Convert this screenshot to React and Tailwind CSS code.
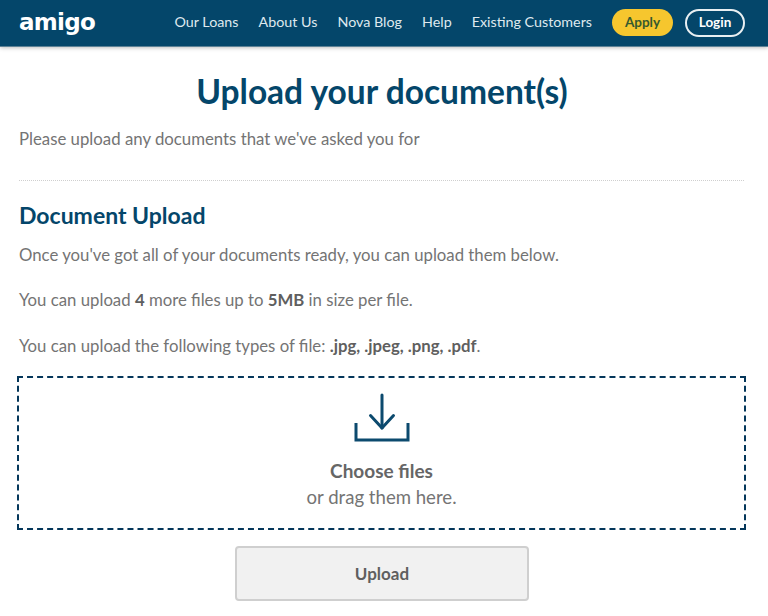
function Nav({ children }) {
  return <a className="text-[14.3px] leading-5 text-[#dfe9ef] whitespace-nowrap mb-[2px]">{children}</a>;
}
export default function App() {
  return (
    <div className="w-[768px] h-[616px] overflow-hidden bg-white font-['Lato',sans-serif] text-[#747474]">
      <header className="h-[47px] bg-[#04466a] border-b border-[#5d8296] shadow-[0_1px_4px_rgba(0,0,0,0.25)] flex items-center pl-[19px] pr-[23px]">
        <span className="font-['DejaVu_Sans',sans-serif] font-bold text-[23px] leading-none text-white tracking-[-0.7px] mb-[1px]">amigo</span>
        <nav className="ml-auto flex items-center gap-[20px]">
          <Nav>Our Loans</Nav>
          <Nav>About Us</Nav>
          <Nav>Nova Blog</Nav>
          <Nav>Help</Nav>
          <Nav>Existing Customers</Nav>
        </nav>
        <span className="ml-[20px] mb-[1px] w-[61px] h-[27px] rounded-full bg-[#f6c62e] text-[#35592f] text-[13.5px] font-bold flex items-center justify-center">Apply</span>
        <span className="ml-[12px] mb-[1px] w-[60px] h-[28px] rounded-full border-2 border-[#e9eff2] text-white text-[13.5px] font-bold flex items-center justify-center">Login</span>
      </header>
      <main className="px-[19px]">
        <h1 className="mt-[24px] pr-[4px] text-center text-[33.5px] leading-10 font-bold text-[#04466a]">Upload your document(s)</h1>
        <p className="mt-[16px] text-[16.8px] leading-6">Please upload any documents that we've asked you for</p>
        <div className="mt-[29px] mr-[5px] border-t border-dotted border-[#cfcfcf]"></div>
        <h2 className="mt-[20px] text-[23px] leading-7 font-bold text-[#04466a]">Document Upload</h2>
        <p className="mt-[14px] text-[16.75px] leading-6">Once you've got all of your documents ready, you can upload them below.</p>
        <p className="mt-[21px] text-[16.75px] leading-6">You can upload <b className="text-[#5f5f5f]">4</b> more files up to <b className="text-[#5f5f5f]">5MB</b> in size per file.</p>
        <p className="mt-[22px] text-[16.75px] leading-6">You can upload the following types of file: <b className="text-[#5f5f5f]">.jpg, .jpeg, .png, .pdf</b>.</p>
        <div className="mt-[18px] -ml-[2px] w-[729px] h-[154px] border-2 border-dashed border-[#04365a] flex flex-col items-center">
          <svg className="mt-[15px]" width="58" height="50" viewBox="0 0 58 50" fill="none" stroke="#0c4a6e" strokeWidth="3" strokeLinecap="round" strokeLinejoin="round">
            <path d="M29 2V35" />
            <path d="M17.5 22.5L29 35L40.5 22.5" />
            <path d="M3 30V47H55V30" strokeLinecap="butt" strokeLinejoin="miter" />
          </svg>
          <span className="mt-[16px] text-[19px] leading-6 font-bold text-[#666666]">Choose files</span>
          <span className="mt-[2px] text-[18.6px] leading-6 text-[#747474]">or drag them here.</span>
        </div>
        <div className="mt-[16px] flex justify-center">
          <button className="w-[294px] h-[55px] ml-[-4px] rounded-[4px] border-2 border-[#cfcfcf] bg-[#f1f1f1] text-[17px] font-bold text-[#5f5f5f]">Upload</button>
        </div>
      </main>
    </div>
  );
}
